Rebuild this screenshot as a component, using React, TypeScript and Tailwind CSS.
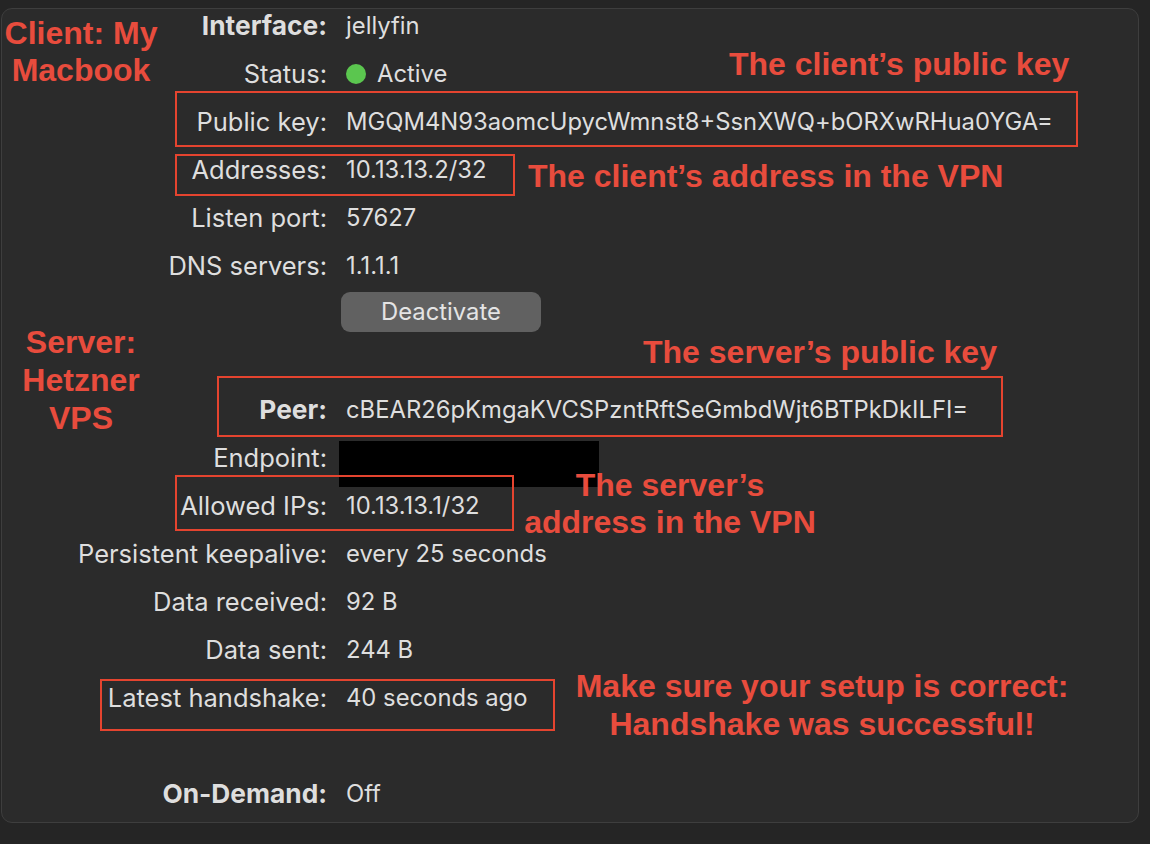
import React from "react";

type Row = { label: string; value?: React.ReactNode; bold?: boolean };

const ui = { fontFamily: "Inter, 'Noto Sans', sans-serif" } as const;
const ann = { fontFamily: "'Liberation Sans', Arial, sans-serif" } as const;

function InfoRow({ label, value, bold }: Row) {
  return (
    <>
      <div className={`h-12 leading-[48px] text-right ${bold ? "font-bold text-[26.3px]" : "text-[25.5px]"}`}>{label}</div>
      <div className="h-12 leading-[48px] flex items-center text-[23.8px]">{value}</div>
    </>
  );
}

function RedBox({ className }: { className: string }) {
  return <div className={`absolute border-2 border-[#e5442f] ${className}`} />;
}

export default function App() {
  const top: Row[] = [
    { label: "Interface:", value: "jellyfin", bold: true },
    {
      label: "Status:",
      value: (
        <span className="flex items-center gap-[11px]">
          <span className="inline-block w-5 h-5 rounded-full bg-[#5bc64f]" />
          <span>Active</span>
        </span>
      ),
    },
    { label: "Public key:", value: "MGQM4N93aomcUpycWmnst8+SsnXWQ+bORXwRHua0YGA=" },
    { label: "Addresses:", value: "10.13.13.2/32" },
    { label: "Listen port:", value: "57627" },
    { label: "DNS servers:", value: "1.1.1.1" },
  ];
  const peer: Row[] = [
    { label: "Peer:", value: "cBEAR26pKmgaKVCSPzntRftSeGmbdWjt6BTPkDkILFI=", bold: true },
    { label: "Endpoint:", value: <span className="block w-[260px] h-[46px] bg-black mt-[12px] -ml-[7px]" /> },
    { label: "Allowed IPs:", value: "10.13.13.1/32" },
    { label: "Persistent keepalive:", value: "every 25 seconds" },
    { label: "Data received:", value: "92 B" },
    { label: "Data sent:", value: "244 B" },
    { label: "Latest handshake:", value: "40 seconds ago" },
  ];

  return (
    <div className="relative w-[1150px] h-[844px] bg-[#252525] overflow-hidden">
      <div className="absolute left-px top-2 w-[1138px] h-[815px] rounded-[11px] border border-[#3e3e3e] bg-[#2b2b2b]" />
      <div className="relative pt-[2px] pl-[1px] text-[#dedede]" style={ui}>
        <div className="grid grid-cols-[326px_1fr] gap-x-[19px]">
          {top.map((r) => (
            <InfoRow key={r.label} {...r} />
          ))}
          <div className="h-24" />
          <div className="h-24 pt-[2px]">
            <div className="w-[200px] h-10 -ml-[5px] rounded-[9px] bg-[#616161] text-[#e4e4e4] text-[23.8px] flex items-center justify-center">
              Deactivate
            </div>
          </div>
          {peer.map((r) => (
            <InfoRow key={r.label} {...r} />
          ))}
          <div className="h-12" />
          <div className="h-12" />
          <InfoRow label="On-Demand:" value="Off" bold />
        </div>
      </div>

      {/* annotation boxes */}
      <RedBox className="left-[175px] top-[91px] w-[903px] h-[56px]" />
      <RedBox className="left-[175px] top-[154px] w-[340px] h-[42px]" />
      <RedBox className="left-[217px] top-[376px] w-[786px] h-[61px]" />
      <RedBox className="left-[175px] top-[475px] w-[339px] h-[56px]" />
      <RedBox className="left-[100px] top-[679px] w-[455px] h-[52px]" />

      {/* annotation texts */}
      <div style={ann} className="absolute inset-0 text-[#e84c3d] font-bold text-[32px] pointer-events-none">
        <div className="absolute left-0 top-[15px] w-[162px] text-center leading-[37px]">
          Client: My
          <br />
          Macbook
        </div>
        <div className="absolute left-0 top-[323px] w-[162px] text-center leading-[38px]">
          Server:
          <br />
          Hetzner
          <br />
          VPS
        </div>
        <div className="absolute left-[729px] top-[45px] leading-[38px] whitespace-nowrap">The client’s public key</div>
        <div className="absolute left-[528px] top-[157px] leading-[38px] whitespace-nowrap">
          The client’s address in the VPN
        </div>
        <div className="absolute left-[643px] top-[333px] leading-[38px] whitespace-nowrap">The server’s public key</div>
        <div className="absolute left-[470px] top-[467px] w-[400px] text-center leading-[37px]">
          The server’s
          <br />
          address in the VPN
        </div>
        <div className="absolute left-[522px] top-[667px] w-[600px] text-center leading-[38px]">
          Make sure your setup is correct:
          <br />
          Handshake was successful!
        </div>
      </div>
    </div>
  );
}
